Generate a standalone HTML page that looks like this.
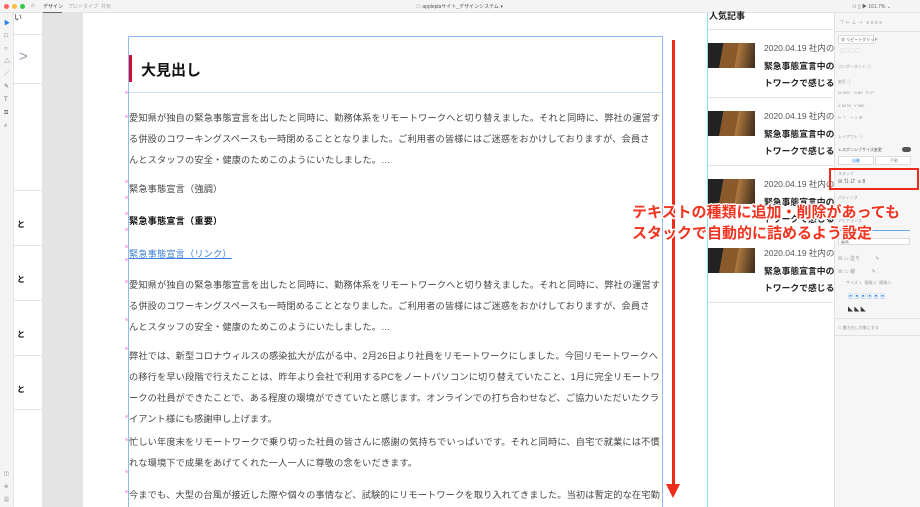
<!DOCTYPE html>
<html><head><meta charset="utf-8"><style>
*{margin:0;padding:0;box-sizing:border-box}
body{width:920px;height:507px;overflow:hidden;position:relative;background:#fff;font-family:"Liberation Sans","Noto Sans CJK JP",sans-serif;}
.a{position:absolute}
.top{left:0;top:0;width:920px;height:13px;background:#f4f4f4;border-bottom:1px solid #e2e2e2}
.tb{left:0;top:13px;width:14px;height:494px;background:#f4f4f4;border-right:1px solid #e4e4e4}
.p{position:absolute;left:129px;font-size:9.2px;color:#444;letter-spacing:.15px;white-space:nowrap;line-height:21px}
.art .d{position:absolute;left:764px;font-size:8.5px;color:#555;white-space:nowrap}
.art .t{position:absolute;left:764px;font-size:8.8px;font-weight:bold;color:#222;white-space:nowrap}
.th{position:absolute;left:708px;width:47px;height:25px;background:linear-gradient(100deg,#222 0 30%,#8a5a2c 30% 60%,#b07a40 60%,#3a2a1a)}
.dv{position:absolute;left:708px;width:125px;height:1px;background:#e0e4ea}
.rp{left:834px;top:13px;width:86px;height:494px;background:#f6f6f6;border-left:1px solid #e2e2e2}
.sm{position:absolute;font-size:4px;color:#999;white-space:nowrap}
.ov{position:absolute;left:632px;font-size:15px;font-weight:bold;color:#f2331f;white-space:nowrap;text-shadow:-1.5px 0 #fff,1.5px 0 #fff,0 -1.5px #fff,0 1.5px #fff,1px 1px #fff,-1px -1px #fff,1px -1px #fff,-1px 1px #fff}
.dot{position:absolute;left:125px;width:3px;height:3px;border-radius:50%;background:#f5b8e6}
</style></head><body>
<div class="a top"></div>
<div class="a" style="left:4px;top:4px;width:5px;height:5px;border-radius:50%;background:#fc605c"></div>
<div class="a" style="left:12px;top:4px;width:5px;height:5px;border-radius:50%;background:#fdbc40"></div>
<div class="a" style="left:20px;top:4px;width:5px;height:5px;border-radius:50%;background:#34c84a"></div>
<div class="a" style="left:31px;top:3px;font-size:6px;color:#555">⌂</div>
<div class="a" style="left:43px;top:3px;font-size:5px;color:#444">デザイン</div>
<div class="a" style="left:43px;top:12px;width:19px;height:1px;background:#666"></div>
<div class="a" style="left:68px;top:3px;font-size:5px;color:#aaa">プロトタイプ</div>
<div class="a" style="left:101px;top:3px;font-size:5px;color:#aaa">共有</div>
<div class="a" style="left:416px;top:3px;font-size:5px;color:#555">☁ appleplaサイト_デザインシステム ▾</div>
<div class="a" style="left:852px;top:3px;font-size:5px;color:#666">⚇ ▯ ▶ 161.7% ⌄</div>
<div class="a tb"></div>
<div class="a" style="left:4px;top:18px;font-size:6px;color:#2680eb;line-height:12.8px;width:8px">▶</div>
<div class="a" style="left:4px;top:30px;font-size:6px;color:#666;line-height:12.8px;width:8px">□<br>○<br>△<br>╱<br>✎<br>T<br>⧉<br>⌕</div>
<div class="a" style="left:4px;top:468px;font-size:5px;color:#777;line-height:13px;width:8px">◫<br>✣<br>▦</div>
<div class="a" style="left:14px;top:13px;width:28px;height:494px;background:#fff"></div>
<div class="a" style="left:14px;top:12px;font-size:8px;color:#333">い</div>
<div class="a" style="left:14px;top:34px;width:28px;height:1px;background:#dde3ea"></div>
<div class="a" style="left:14px;top:83px;width:28px;height:1px;background:#dde3ea"></div>
<div class="a" style="left:19px;top:48px;font-size:15px;color:#8a9bb0">&gt;</div>
<div class="a" style="left:14px;top:190px;width:28px;height:1px;background:#dde3ea"></div>
<div class="a" style="left:14px;top:245px;width:28px;height:1px;background:#dde3ea"></div>
<div class="a" style="left:14px;top:300px;width:28px;height:1px;background:#dde3ea"></div>
<div class="a" style="left:14px;top:355px;width:28px;height:1px;background:#dde3ea"></div>
<div class="a" style="left:14px;top:409px;width:28px;height:1px;background:#dde3ea"></div>
<div class="a" style="left:17px;top:219px;font-size:8px;font-weight:bold">と</div>
<div class="a" style="left:17px;top:274px;font-size:8px;font-weight:bold">と</div>
<div class="a" style="left:17px;top:329px;font-size:8px;font-weight:bold">と</div>
<div class="a" style="left:17px;top:384px;font-size:8px;font-weight:bold">と</div>
<div class="a" style="left:42px;top:13px;width:41px;height:494px;background:#e4e4e4"></div>
<div class="a" style="left:128px;top:36px;width:535px;height:471px;border:1px solid #8fbcf0;border-bottom:none"></div>
<div class="a" style="left:129px;top:92px;width:533px;height:1px;background:#cfe2f8"></div>
<div class="a" style="left:129px;top:55px;width:3px;height:27px;background:#d0103a"></div>
<div class="a" style="left:141px;top:59px;font-size:15px;font-weight:bold;color:#111;font-family:'Noto Sans CJK JP',sans-serif">大見出し</div>
<div class="dot" style="top:91px"></div><div class="dot" style="top:115px"></div><div class="dot" style="top:180px"></div><div class="dot" style="top:196px"></div><div class="dot" style="top:212px"></div><div class="dot" style="top:228px"></div><div class="dot" style="top:245px"></div><div class="dot" style="top:258px"></div><div class="dot" style="top:280px"></div><div class="dot" style="top:318px"></div><div class="dot" style="top:347px"></div><div class="dot" style="top:415px"></div><div class="dot" style="top:438px"></div><div class="dot" style="top:470px"></div><div class="dot" style="top:490px"></div>
<div class="p" style="top:108px">愛知県が独自の緊急事態宣言を出したと同時に、勤務体系をリモートワークへと切り替えました。それと同時に、弊社の運営す<br>る併設のコワーキングスペースも一時閉めることとなりました。ご利用者の皆様にはご迷惑をおかけしておりますが、会員さ<br>んとスタッフの安全・健康のためこのようにいたしました。…</div>
<div class="p" style="top:179px">緊急事態宣言（強調）</div>
<div class="p" style="top:211px;font-weight:bold;color:#111">緊急事態宣言（重要）</div>
<div class="p" style="top:244px;color:#3d7fd6;text-decoration:underline">緊急事態宣言（リンク）</div>
<div class="p" style="top:275px">愛知県が独自の緊急事態宣言を出したと同時に、勤務体系をリモートワークへと切り替えました。それと同時に、弊社の運営す<br>る併設のコワーキングスペースも一時閉めることとなりました。ご利用者の皆様にはご迷惑をおかけしておりますが、会員さ<br>んとスタッフの安全・健康のためこのようにいたしました。…</div>
<div class="p" style="top:346px">弊社では、新型コロナウィルスの感染拡大が広がる中、2月26日より社員をリモートワークにしました。今回リモートワークへ<br>の移行を早い段階で行えたことは、昨年より会社で利用するPCをノートパソコンに切り替えていたこと、1月に完全リモートワ<br>ークの社員ができたことで、ある程度の環境ができていたと感じます。オンラインでの打ち合わせなど、ご協力いただいたクラ<br>イアント様にも感謝申し上げます。</div>
<div class="p" style="top:432px">忙しい年度末をリモートワークで乗り切った社員の皆さんに感謝の気持ちでいっぱいです。それと同時に、自宅で就業には不慣<br>れな環境下で成果をあげてくれた一人一人に尊敬の念をいだきます。</div>
<div class="p" style="top:485px">今までも、大型の台風が接近した際や個々の事情など、試験的にリモートワークを取り入れてきました。当初は暫定的な在宅勤</div>
<div class="a" style="left:672px;top:40px;width:3px;height:447px;background:#ee2a1a"></div>
<div class="a" style="left:666px;top:484px;width:0;height:0;border-left:7.5px solid transparent;border-right:7.5px solid transparent;border-top:14px solid #ee2a1a"></div>
<div class="a" style="left:707px;top:13px;width:1px;height:494px;background:#7fe6f0"></div>
<div class="a" style="left:709px;top:9px;font-size:9px;font-weight:bold;color:#222">人気記事</div>
<div class="art">
<div class="dv" style="top:29px"></div>
<div class="th" style="top:43px"></div><div class="d" style="top:42px">2020.04.19 社内の職</div><div class="t" style="top:58px;line-height:17px">緊急事態宣言中の在<br>トワークで感じるこ</div>
<div class="dv" style="top:97px"></div>
<div class="th" style="top:111px"></div><div class="d" style="top:110px">2020.04.19 社内の職</div><div class="t" style="top:126px;line-height:17px">緊急事態宣言中の在<br>トワークで感じるこ</div>
<div class="dv" style="top:165px"></div>
<div class="th" style="top:179px"></div><div class="d" style="top:178px">2020.04.19 社内の職</div><div class="t" style="top:194px;line-height:17px">緊急事態宣言中の在<br>トワークで感じるこ</div>
<div class="th" style="top:248px"></div><div class="d" style="top:247px">2020.04.19 社内の職</div><div class="t" style="top:263px;line-height:17px">緊急事態宣言中の在<br>トワークで感じるこ</div>
<div class="dv" style="top:302px"></div>
</div>
<div class="a rp"></div>
<div class="sm" style="left:840px;top:19px;font-size:5px">⊤ ⊢ ⊥ ⊣ &nbsp; ≡ ≡ ≡ ≡</div>
<div class="a" style="left:834px;top:31px;width:86px;height:1px;background:#e2e2e2"></div>
<div class="a" style="left:838px;top:35px;width:36px;height:9px;border:1px solid #ddd;background:#fff"></div>
<div class="sm" style="left:841px;top:37px;color:#555">▦ リピートグリッド</div>
<div class="sm" style="left:840px;top:48px">▢ ▢ ▢ ▢</div>
<div class="sm" style="left:838px;top:64px">コンポーネント ⓘ</div>
<div class="sm" style="left:838px;top:79px">変形 ⓘ</div>
<div class="sm" style="left:838px;top:90px">W 920 &nbsp;&nbsp; H 80 &nbsp; ↻ 0°</div>
<div class="sm" style="left:838px;top:103px">X 5078 &nbsp; Y 962</div>
<div class="sm" style="left:838px;top:115px">⊢ ⊤ &nbsp; ⊣ ⊥ ⊞</div>
<div class="sm" style="left:838px;top:134px">レイアウト ⓘ</div>
<div class="sm" style="left:838px;top:147px;color:#555">レスポンシブサイズ変更</div>
<div class="a" style="left:902px;top:147px;width:9px;height:5px;border-radius:3px;background:#555"></div>
<div class="a" style="left:838px;top:156px;width:36px;height:9px;border:1px solid #ddd;background:#fff"></div>
<div class="a" style="left:875px;top:156px;width:36px;height:9px;border:1px solid #ddd;background:#fff"></div>
<div class="sm" style="left:852px;top:158px;color:#2680eb">自動</div><div class="sm" style="left:890px;top:158px">手動</div>
<div class="a" style="left:829px;top:168px;width:90px;height:22px;border:2px solid #ee2a1a"></div>
<div class="sm" style="left:838px;top:171px">スタック</div>
<div class="sm" style="left:838px;top:178px;font-size:5px;color:#555">☒ ⇅ ⇵ &nbsp;≡ 8</div>
<div class="sm" style="left:838px;top:195px">パディング</div>
<div class="sm" style="left:838px;top:218px">アピアランス</div>
<div class="a" style="left:840px;top:230px;width:70px;height:1px;background:#6aa8e8"></div>
<div class="a" style="left:838px;top:238px;width:72px;height:7px;border:1px solid #ddd;background:#fff"></div>
<div class="sm" style="left:841px;top:239px;color:#555">通常</div>
<div class="sm" style="left:838px;top:255px;font-size:5px">☒ ▭ 塗り &nbsp;&nbsp;&nbsp;&nbsp;&nbsp;&nbsp;&nbsp;&nbsp;&nbsp; ✎</div>
<div class="sm" style="left:838px;top:268px;font-size:5px">☒ ▭ 線 &nbsp;&nbsp;&nbsp;&nbsp;&nbsp;&nbsp;&nbsp;&nbsp;&nbsp;&nbsp; ✎</div>
<div class="sm" style="left:846px;top:280px">サイズ 1 &nbsp; 間隔 0 &nbsp; 間隔 0</div>
<div class="sm" style="left:848px;top:293px;font-size:5px;color:#2680eb">▣ ▣ ▣ ▣ ▣ ▣</div>
<div class="sm" style="left:848px;top:306px;font-size:5px;color:#333">◣ ◣ ◣</div>
<div class="a" style="left:834px;top:318px;width:86px;height:1px;background:#e2e2e2"></div>
<div class="sm" style="left:838px;top:325px">☐ 書き出し対象にする</div>
<div class="a" style="left:834px;top:335px;width:86px;height:1px;background:#e2e2e2"></div>
<div class="ov" style="top:201px">テキストの種類に追加・削除があっても</div>
<div class="ov" style="top:222px">スタックで自動的に詰めるよう設定</div>
</body></html>
